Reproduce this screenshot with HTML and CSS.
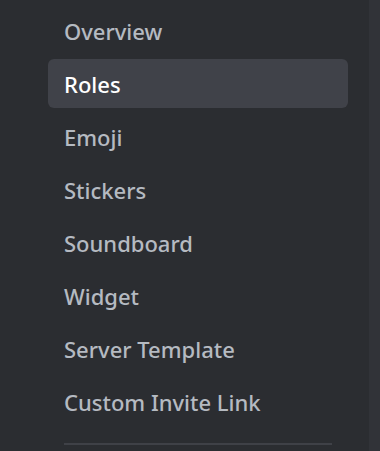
FILE: index.html
```html
<!DOCTYPE html>
<html lang="en">

<head>
  <meta charset="UTF-8" />
  <meta name="viewport" content="width=device-width, initial-scale=1.0" />
  <title>Server Settings</title>
  <link rel="stylesheet" href="styles.css">
</head>

<body>
  <div class="layout">
    <!-- Side menu -->
    <nav class="sidebar">
      <div class="nav-item">Overview</div>
      <div class="nav-item selected">Roles</div>
      <div class="nav-item">Emoji</div>
      <div class="nav-item">Stickers</div>
      <div class="nav-item">Soundboard</div>
      <div class="nav-item">Widget</div>
      <div class="nav-item">Server Template</div>
      <div class="nav-item">Custom Invite Link</div>
      <div class="separator"></div>
    </nav>

    <!-- Content area -->
    <main class="content"></main>
  </div>
</body>

</html>
```

FILE: styles.css
```css
body {
  margin: 0;
  background: #2b2d31;
  font-family: "Noto Sans", sans-serif;
  overflow: hidden;
}

.layout {
  display: flex;
  height: 100vh;
}

.sidebar {
  width: 300px;
  padding: 6px 21px 0 48px;
  display: flex;
  flex-direction: column;
  gap: 4px;
  background: #2b2d31;
}

.nav-item {
  height: 49px;
  padding: 0 16px;
  display: flex;
  align-items: center;
  border-radius: 6px;
  font-size: 22px;
  font-weight: 500;
  color: #b5bac1;
  cursor: pointer;
}

.nav-item.selected {
  background: #404249;
  color: #ffffff;
}

/* Divider under the list */
.separator {
  height: 2px;
  margin: 13px 16px 0;
  background: #3f4147;
  flex-shrink: 0;
}

.content {
  flex: 1;
  background: #313338;
}
```
